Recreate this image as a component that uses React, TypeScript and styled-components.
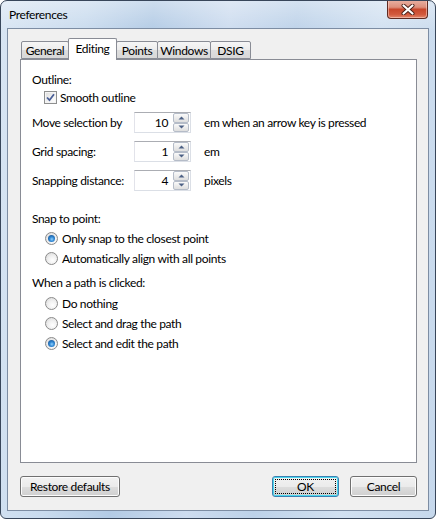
import React from "react";
import styled, { createGlobalStyle } from "styled-components";

const GlobalStyle = createGlobalStyle`
  html, body {
    margin: 0;
    padding: 0;
    background: #ffffff;
  }
  body {
    font-family: Lato, "Liberation Sans", sans-serif;
    font-size: 12px;
    letter-spacing: -0.35px;
    color: #000;
  }
`;

const Window = styled.div`
  width: 436px;
  height: 519px;
  box-sizing: border-box;
  border: 1px solid #38465a;
  border-radius: 7px 7px 6px 6px;
  display: flex;
  flex-direction: column;
  overflow: hidden;
  background: linear-gradient(
      180deg,
      rgba(255, 255, 255, 0.35) 0%,
      rgba(255, 255, 255, 0) 6%
    ),
    linear-gradient(
      95deg,
      #d8e5f3 0%,
      #c9dbee 18%,
      #b3cbe5 32%,
      #cddcef 48%,
      #bdd2e9 62%,
      #d2e1f1 80%,
      #c6d8ec 100%
    );
`;

const TitleBar = styled.div`
  height: 27px;
  display: flex;
  justify-content: space-between;
  align-items: flex-start;
  padding-left: 8px;
  padding-right: 7px;
`;

const Title = styled.div`
  line-height: 27px;
  font-size: 12px;
  color: #000;
`;

const CloseButton = styled.div`
  width: 41px;
  height: 19px;
  margin-top: -1px;
  box-sizing: border-box;
  border: 1px solid #5e2a22;
  border-top: none;
  border-radius: 0 0 4px 4px;
  background: linear-gradient(
    180deg,
    #e9b1a3 0%,
    #dd8f7c 40%,
    #c8472c 52%,
    #d2593d 80%,
    #e3876c 100%
  );
  box-shadow: inset 0 0 0 1px rgba(255, 220, 210, 0.5);
  display: flex;
  align-items: center;
  justify-content: center;
`;

const ClientFrame = styled.div`
  flex: 1;
  display: flex;
  padding: 0 6px 7px 6px;
`;

const Client = styled.div`
  flex: 1;
  border: 1px solid #7d8da3;
  background: #f0f0f0;
  display: flex;
  flex-direction: column;
  padding: 9px 11px 13px 12px;
`;

const TabStrip = styled.div`
  height: 21px;
  display: flex;
  align-items: flex-end;
  padding-left: 1px;
  position: relative;
  z-index: 2;
`;

const Tab = styled.div<{ w: number; active?: boolean }>`
  width: ${({ w }) => w}px;
  box-sizing: border-box;
  height: ${({ active }) => (active ? 22 : 18)}px;
  margin-bottom: ${({ active }) => (active ? -1 : 0)}px;
  margin-left: -1px;
  &:first-child {
    margin-left: 0;
  }
  border: 1px solid #898c95;
  border-bottom: ${({ active }) => (active ? "none" : "1px solid #898c95")};
  border-radius: 2px 2px 0 0;
  background: ${({ active }) =>
    active
      ? "#ffffff"
      : "linear-gradient(180deg, #f6f6f6 0%, #ececec 50%, #dedede 51%, #d8d8d8 100%)"};
  position: relative;
  z-index: ${({ active }) => (active ? 2 : 1)};
  display: flex;
  justify-content: center;
  align-items: center;
  padding-bottom: ${({ active }) => (active ? 2 : 0)}px;
  font-size: 12px;
  white-space: nowrap;
`;

const Panel = styled.div`
  height: 404px;
  box-sizing: border-box;
  border: 1px solid #898c95;
  background: #ffffff;
  padding: 12px 11px 0 11px;
  display: flex;
  flex-direction: column;
`;

const SectionLabel = styled.div<{ mt?: number }>`
  height: 16px;
  line-height: 16px;
  margin-top: ${({ mt }) => mt || 0}px;
`;

const CheckRow = styled.label`
  height: 17px;
  margin-top: 1px;
  display: flex;
  align-items: center;
  padding-left: 12px;
  gap: 3px;
`;

const CheckBox = styled.span`
  width: 13px;
  height: 13px;
  box-sizing: border-box;
  border: 1px solid #8e8f8f;
  background: linear-gradient(135deg, #dcdcdc 0%, #f4f4f4 60%, #ffffff 100%);
  box-shadow: inset 0 0 0 1px #f4f4f4;
  display: flex;
  align-items: center;
  justify-content: center;
`;

const SpinRow = styled.div<{ mt: number }>`
  height: 21px;
  margin-top: ${({ mt }) => mt}px;
  display: flex;
  align-items: center;
`;

const SpinLabel = styled.div`
  width: 102px;
`;

const SpinBox = styled.div`
  width: 57px;
  height: 21px;
  box-sizing: border-box;
  border: 1px solid #dbdfe6;
  border-top-color: #abadb3;
  border-left-color: #e2e3ea;
  display: flex;
  background: #fff;
`;

const SpinValue = styled.div`
  flex: 1;
  text-align: right;
  padding-right: 5px;
  line-height: 19px;
`;

const SpinButtons = styled.div`
  width: 16px;
  display: flex;
  flex-direction: column;
  padding: 0 1px 0 0;
`;

const SpinButton = styled.div`
  flex: 1;
  box-sizing: border-box;
  border: 1px solid #b5bcc8;
  border-radius: 2px;
  background: linear-gradient(180deg, #fafafa 0%, #ececec 50%, #dedede 100%);
  display: flex;
  align-items: center;
  justify-content: center;
`;

const Unit = styled.div`
  margin-left: 13px;
`;

const RadioRow = styled.label<{ mt?: number }>`
  height: 20px;
  margin-top: ${({ mt }) => mt || 0}px;
  display: flex;
  align-items: center;
  padding-left: 13px;
  gap: 4px;
`;

const RadioDot = styled.span<{ checked?: boolean }>`
  width: 13px;
  height: 13px;
  box-sizing: border-box;
  border-radius: 50%;
  border: 1px solid #8a8a8a;
  background: radial-gradient(
    circle at 60% 65%,
    #ffffff 0%,
    #f0f0f0 45%,
    #d4d4d4 100%
  );
  display: flex;
  align-items: center;
  justify-content: center;
  &::after {
    content: "";
    display: ${({ checked }) => (checked ? "block" : "none")};
    width: 7px;
    height: 7px;
    border-radius: 50%;
    background: radial-gradient(
      circle at 55% 60%,
      #8fd0ff 0%,
      #2f86d2 40%,
      #15447f 100%
    );
  }
`;

const ButtonRow = styled.div`
  margin-top: 13px;
  display: flex;
  justify-content: space-between;
`;

const ButtonGroup = styled.div`
  display: flex;
  gap: 11px;
`;

const Button = styled.button<{ w: number; isDefault?: boolean }>`
  width: ${({ w }) => w}px;
  height: 21px;
  box-sizing: border-box;
  padding: 0;
  font-family: inherit;
  font-size: 12px;
  letter-spacing: inherit;
  color: #000;
  border: 1px solid ${({ isDefault }) => (isDefault ? "#3c7fb1" : "#707070")};
  border-radius: 3px;
  background: linear-gradient(
    180deg,
    #f2f2f2 0%,
    #ebebeb 50%,
    #dddddd 51%,
    #cfcfcf 100%
  );
  box-shadow: inset 0 0 0 1px
    ${({ isDefault }) => (isDefault ? "#48d6ee" : "#fcfcfc")};
  position: relative;
  cursor: default;
  &::after {
    content: "";
    display: ${({ isDefault }) => (isDefault ? "block" : "none")};
    position: absolute;
    inset: 2px;
    border: 1px dotted #000;
  }
`;

const Arrow: React.FC<{ up?: boolean }> = ({ up }) => (
  <svg width="7" height="4" viewBox="0 0 7 4">
    <path
      d={up ? "M0.5 3.5 L3.5 0.5 L6.5 3.5 Z" : "M0.5 0.5 L3.5 3.5 L6.5 0.5 Z"}
      fill="#4d6185"
    />
  </svg>
);

const Spinner: React.FC<{ value: string }> = ({ value }) => (
  <SpinBox>
    <SpinValue>{value}</SpinValue>
    <SpinButtons>
      <SpinButton>
        <Arrow up />
      </SpinButton>
      <SpinButton>
        <Arrow />
      </SpinButton>
    </SpinButtons>
  </SpinBox>
);

const App: React.FC = () => {
  return (
    <>
      <GlobalStyle />
      <Window>
        <TitleBar>
          <Title>Preferences</Title>
          <CloseButton>
            <svg width="14" height="11" viewBox="0 0 14 11">
              <path
                d="M2.5 1.5 L11.5 9.5 M11.5 1.5 L2.5 9.5"
                stroke="#4a2018"
                strokeWidth="4"
                strokeLinecap="round"
              />
              <path
                d="M2.5 1.5 L11.5 9.5 M11.5 1.5 L2.5 9.5"
                stroke="#ffffff"
                strokeWidth="2.2"
                strokeLinecap="round"
              />
            </svg>
          </CloseButton>
        </TitleBar>
        <ClientFrame>
          <Client>
            <TabStrip>
              <Tab w={48}>General</Tab>
              <Tab w={49} active>
                Editing
              </Tab>
              <Tab w={42}>Points</Tab>
              <Tab w={54}>Windows</Tab>
              <Tab w={41}>DSIG</Tab>
            </TabStrip>
            <Panel>
              <SectionLabel>Outline:</SectionLabel>
              <CheckRow>
                <CheckBox>
                  <svg width="9" height="9" viewBox="0 0 9 9">
                    <path
                      d="M1 4.5 L3.5 7.2 L8 1.2"
                      stroke="#4a5f97"
                      strokeWidth="1.8"
                      fill="none"
                    />
                  </svg>
                </CheckBox>
                Smooth outline
              </CheckRow>
              <SpinRow mt={6}>
                <SpinLabel>Move selection by</SpinLabel>
                <Spinner value="10" />
                <Unit>em when an arrow key is pressed</Unit>
              </SpinRow>
              <SpinRow mt={8}>
                <SpinLabel>Grid spacing:</SpinLabel>
                <Spinner value="1" />
                <Unit>em</Unit>
              </SpinRow>
              <SpinRow mt={8}>
                <SpinLabel>Snapping distance:</SpinLabel>
                <Spinner value="4" />
                <Unit>pixels</Unit>
              </SpinRow>
              <SectionLabel mt={20}>Snap to point:</SectionLabel>
              <RadioRow mt={1}>
                <RadioDot checked />
                Only snap to the closest point
              </RadioRow>
              <RadioRow>
                <RadioDot />
                Automatically align with all points
              </RadioRow>
              <SectionLabel mt={7}>When a path is clicked:</SectionLabel>
              <RadioRow mt={2}>
                <RadioDot />
                Do nothing
              </RadioRow>
              <RadioRow>
                <RadioDot />
                Select and drag the path
              </RadioRow>
              <RadioRow>
                <RadioDot checked />
                Select and edit the path
              </RadioRow>
            </Panel>
            <ButtonRow>
              <Button w={100}>Restore defaults</Button>
              <ButtonGroup>
                <Button w={67} isDefault>
                  OK
                </Button>
                <Button w={67}>Cancel</Button>
              </ButtonGroup>
            </ButtonRow>
          </Client>
        </ClientFrame>
      </Window>
    </>
  );
};

export default App;
